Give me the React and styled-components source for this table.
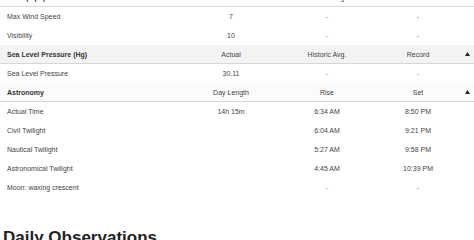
import React from 'react';
import styled, { createGlobalStyle } from 'styled-components';

const GlobalStyle = createGlobalStyle`
  html, body { margin: 0; padding: 0; background: #fff; }
  body { font-family: "Liberation Sans", Arial, sans-serif; overflow: hidden; }
`;

const Page = styled.div`
  width: 474px;
  margin-top: -12px;
`;

const Table = styled.div`
  display: flex;
  flex-direction: column;
`;

const Row = styled.div`
  display: grid;
  grid-template-columns: 183px 96px 96px 86px 1fr;
  align-items: center;
  height: ${p => (p.$head ? '18px' : '19px')};
  font-size: 7px;
  color: #444;
  background: ${p => p.$bg || '#fff'};
  border-bottom: ${p => (p.$head ? '1px solid #d6d6d6' : 'none')};
`;

const Label = styled.div`
  padding-left: 7px;
  font-weight: ${p => (p.$bold ? 700 : 400)};
  color: ${p => (p.$bold ? '#333' : '#444')};
  white-space: nowrap;
`;

const Cell = styled.div`
  text-align: center;
  color: ${p => (p.$muted ? '#888' : '#444')};
  white-space: nowrap;
`;

const Caret = styled.div`
  display: flex;
  justify-content: center;
  svg { display: block; }
`;

const Heading = styled.h2`
  margin: 31px 0 0 3px;
  font-size: 17px;
  font-weight: 700;
  color: #222;
`;

const CaretIcon = () => (
  <svg width="5" height="4" viewBox="0 0 5 4">
    <path d="M0 4 L2.5 0 L5 4 Z" fill="#222" />
  </svg>
);

const sections = [
  {
    title: 'Wind (mph)',
    bg: '#fcfcfc',
    cols: ['Actual', 'Historic Avg.', 'Record'],
    rows: [
      ['Max Wind Speed', '7', '-', '-'],
      ['Visibility', '10', '-', '-'],
    ],
  },
  {
    title: 'Sea Level Pressure (Hg)',
    bg: '#f3f3f3',
    cols: ['Actual', 'Historic Avg.', 'Record'],
    rows: [['Sea Level Pressure', '30.11', '-', '-']],
  },
  {
    title: 'Astronomy',
    bg: '#fbfbfb',
    cols: ['Day Length', 'Rise', 'Set'],
    rows: [
      ['Actual Time', '14h 15m', '6:34 AM', '8:50 PM'],
      ['Civil Twilight', '', '6:04 AM', '9:21 PM'],
      ['Nautical Twilight', '', '5:27 AM', '9:58 PM'],
      ['Astronomical Twilight', '', '4:45 AM', '10:39 PM'],
      ['Moon: waxing crescent', '', '-', '-'],
    ],
  },
];

export default function App() {
  return (
    <Page>
      <GlobalStyle />
      <Table>
        {sections.map(sec => (
          <React.Fragment key={sec.title}>
            <Row $head $bg={sec.bg}>
              <Label $bold>{sec.title}</Label>
              {sec.cols.map(c => (
                <Cell key={c}>{c}</Cell>
              ))}
              <Caret><CaretIcon /></Caret>
            </Row>
            {sec.rows.map(r => (
              <Row key={r[0]}>
                <Label>{r[0]}</Label>
                {r.slice(1).map((v, i) => (
                  <Cell key={i} $muted={v === '-'}>{v}</Cell>
                ))}
                <div />
              </Row>
            ))}
          </React.Fragment>
        ))}
      </Table>
      <Heading>Daily Observations</Heading>
    </Page>
  );
}
